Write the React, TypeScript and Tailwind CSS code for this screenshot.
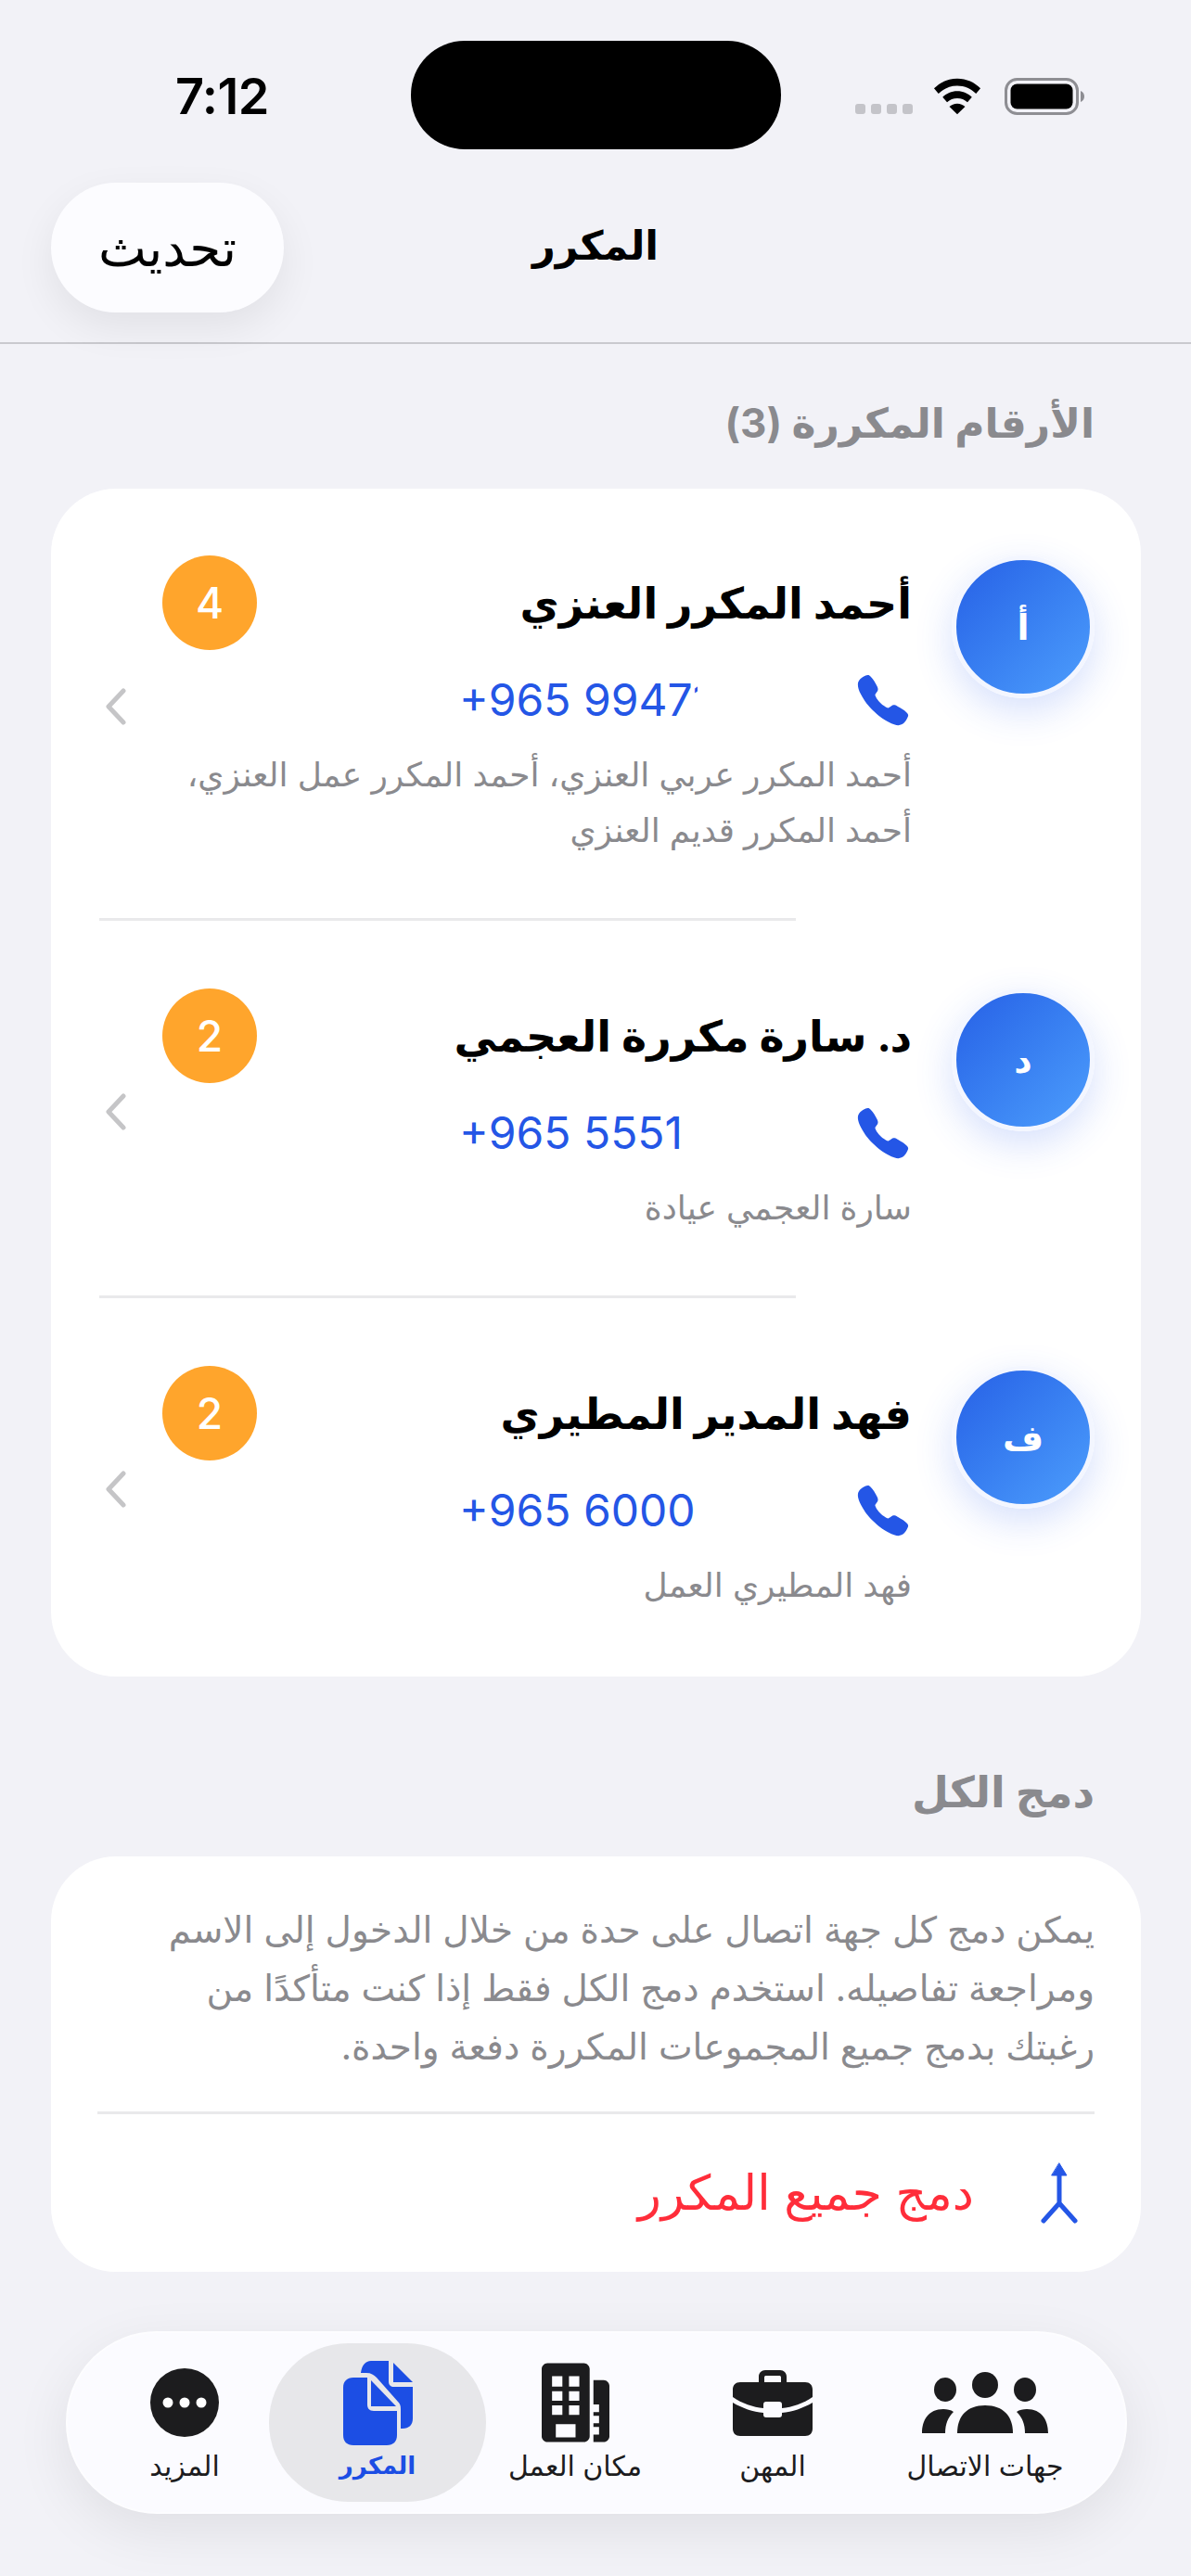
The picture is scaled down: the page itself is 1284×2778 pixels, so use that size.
import { IoCall } from "react-icons/io5";

const contacts = [
  { initial: "أ", name: "أحمد المكرر العنزي", count: 4, phone: "+965 99471", phoneBox: "w-[257px] overflow-hidden", aliases: ["أحمد المكرر عربي العنزي، أحمد المكرر عمل العنزي،", "أحمد المكرر قديم العنزي"] },
  { initial: "د", name: "د. سارة مكررة العجمي", count: 2, phone: "+965 5551", phoneBox: "w-[257px]", aliases: ["سارة العجمي عيادة"] },
  { initial: "ف", name: "فهد المدير المطيري", count: 2, phone: "+965 6000", phoneBox: "w-[257px]", aliases: ["فهد المطيري العمل"] },
];

function StatusBar() {
  return (
    <div dir="ltr" className="relative h-[197px] shrink-0">
      <div className="absolute left-[443px] top-[44px] h-[117px] w-[399px] rounded-[58px] bg-black" />
      <div className="flex items-center pl-[189px] pr-[115px] pt-[76px]">
        <span className="text-[54px] font-semibold leading-[56px] tracking-[-0.5px] text-black">7:12</span>
        <div className="ml-auto flex items-center">
          <div className="mt-[26px] flex gap-[6px]">
            {[0, 1, 2, 3].map(i => (
              <span key={i} className="h-[11px] w-[11px] rounded-[3px] bg-[#c4c4c9]" />
            ))}
          </div>
          <svg viewBox="0 0 54 40" className="ml-[22px] h-[40px] w-[52px]" fill="#000">
            <path d="M27 0C16.600 0 7.600 4.200 1 11l5 6c5.300-5.600 12.600-9 21-9s15.700 3.400 21 9l5-6C46.400 4.200 37.400 0 27 0z" />
            <path d="M27 14c-6.500 0-12 2.500-16.400 6.800l5 5.800C18.700 23.500 22.600 22 27 22s8.300 1.500 11.400 4.600l5-5.800C39 16.500 33.500 14 27 14z" />
            <path d="M27 28c-3.500 0-6.600 1.300-8.800 3.500L27 40l8.800-8.500C33.600 29.300 30.500 28 27 28z" />
          </svg>
          <svg viewBox="0 0 86 40" className="ml-[25px] h-[40px] w-[86px]">
            <rect x="1.500" y="1.500" width="77" height="37" rx="12" fill="none" stroke="#8e8e93" strokeWidth="3" />
            <rect x="6.500" y="6.500" width="67" height="27" rx="7" fill="#000" />
            <path d="M82 14c2.500 1 4 3.200 4 6s-1.500 5-4 6z" fill="#8e8e93" />
          </svg>
        </div>
      </div>
    </div>
  );
}

function ContactRow({ c, pad }: { c: (typeof contacts)[number]; pad: string }) {
  return (
    <div className={pad}>
      <div className="flex items-start pl-[58px] pr-[50px]">
        <div className="flex h-[154px] w-[154px] shrink-0 items-center justify-center rounded-full border-[5px] border-[#f3f6ff] bg-gradient-to-br from-[#2860e6] to-[#4d9dfc] text-[38px] font-bold text-white shadow-[0_14px_40px_rgba(50,100,240,0.2)]">
          {c.initial}
        </div>
        <div className="ml-[38px] mr-[43px] min-w-0 flex-1">
          <div className="flex h-[102px] items-center justify-between">
            <span className="text-[46px] font-bold leading-[60px] text-black">{c.name}</span>
            <span className="flex h-[102px] w-[102px] items-center justify-center rounded-full bg-[#ffa52c] font-['Inter',sans-serif] text-[46px] font-medium text-white">
              {c.count}
            </span>
          </div>
          <div className="mt-[26px] flex h-[56px] items-center">
            <IoCall className="h-[62px] w-[62px] shrink-0 text-[#2456e6]" />
            <span dir="ltr" className={`mr-[169px] whitespace-nowrap text-left font-['Inter',sans-serif] text-[48px] leading-[56px] text-[#2456e6] ${c.phoneBox}`}>
              {c.phone}
            </span>
          </div>
          <div className="mt-[22px] text-[36px] leading-[60px] text-[#8a8a8e]">
            {c.aliases.map(a => (
              <div key={a} className="whitespace-nowrap">{a}</div>
            ))}
          </div>
        </div>
        <svg viewBox="0 0 24 40" fill="none" className="h-[40px] w-[24px] shrink-0 self-center" stroke="#c5c5c7" strokeWidth="5" strokeLinecap="round" strokeLinejoin="round">
          <path d="M20 3 4 20l16 17" />
        </svg>
      </div>
    </div>
  );
}

function Tab({ label, active, box, children }: { label: string; active?: boolean; box: string; children: React.ReactNode }) {
  return (
    <div className={`flex h-[171px] shrink-0 flex-col items-center justify-end pb-[19px] ${box}`}>
      <div className="flex h-[96px] items-center justify-center">{children}</div>
      <span className={active ? "whitespace-nowrap text-[26px] font-bold leading-[40px] text-[#1c4ee4]" : "whitespace-nowrap text-[30px] leading-[40px] text-[#1c1c1e]"}>{label}</span>
    </div>
  );
}

export default function App() {
  return (
    <div className="flex h-[2778px] w-[1284px] flex-col overflow-hidden bg-[#f2f2f7] font-['Inter','DejaVu_Sans',sans-serif]">
      <StatusBar />

      {/* Nav header */}
      <div className="relative flex h-[174px] shrink-0 items-start justify-center border-b-2 border-[#c9c9ce]">
        <div className="absolute left-[55px] top-0 flex h-[140px] w-[251px] items-center justify-center rounded-[70px] bg-[#fcfcff] text-[55px] text-black shadow-[0_16px_44px_rgba(0,0,0,0.07)]">
          تحديث
        </div>
        <span className="mt-[37px] text-[43px] font-bold leading-[60px] text-black">المكرر</span>
      </div>

      <div dir="rtl" className="flex flex-1 flex-col pl-[55px] pr-[54px]">
        <h2 className="mt-[55px] pr-[50px] text-[44px] font-bold leading-[60px] text-[#8a8a8e]">الأرقام المكررة (3)</h2>

        <div className="mt-[41px] flex flex-col rounded-[70px] bg-white pt-[72px]">
          <ContactRow c={contacts[0]} pad="pb-[65px]" />
          <div className="ml-[52px] mr-[372px] h-[3px] bg-[#e9e9eb]" />
          <ContactRow c={contacts[1]} pad="pb-[65px] pt-[73px]" />
          <div className="ml-[52px] mr-[372px] h-[3px] bg-[#e9e9eb]" />
          <ContactRow c={contacts[2]} pad="pb-[69px] pt-[73px]" />
        </div>

        <h2 className="mt-[94px] pr-[50px] text-[46px] font-bold leading-[60px] text-[#8a8a8e]">دمج الكل</h2>

        <div className="mt-[40px] rounded-[70px] bg-white px-[50px] pb-[52px] pt-[47px]">
          <p className="whitespace-nowrap text-[39px] leading-[63px] text-[#8a8a8e]">
            يمكن دمج كل جهة اتصال على حدة من خلال الدخول إلى الاسم
            <br />
            ومراجعة تفاصيله. استخدم دمج الكل فقط إذا كنت متأكدًا من
            <br />
            رغبتك بدمج جميع المجموعات المكررة دفعة واحدة.
          </p>
          <div className="mt-[39px] h-[3px] bg-[#e9e9eb]" />
          <div className="mt-[52px] flex h-[66px] items-center">
            <svg viewBox="0 0 40 66" className="mr-[18px] h-[66px] w-[40px]" fill="none" stroke="#2456e6" strokeWidth="5" strokeLinecap="round" strokeLinejoin="round">
              <path d="M20 10v34M3 63l17-19 17 19" />
              <path d="M20 1l8 13H12z" fill="#2456e6" strokeWidth="1" />
            </svg>
            <span className="mr-[72px] text-[52px] leading-[60px] text-[#ff2d3a]">دمج جميع المكرر</span>
          </div>
        </div>

        {/* Tab bar */}
        <div className="ml-[16px] mr-[15px] mt-[64px] flex h-[197px] items-center rounded-[98px] border-2 border-[#fdfdff] bg-[#fbfbff] pr-[36px] shadow-[0_18px_60px_rgba(0,0,0,0.08)]">
          <Tab label="جهات الاتصال" box="w-[230px]">
            <svg viewBox="0 0 136 66" className="h-[66px] w-[136px]" fill="#1c1c1e">
              <ellipse cx="68" cy="14" rx="14" ry="14" />
              <ellipse cx="25" cy="19" rx="12" ry="13" />
              <ellipse cx="111" cy="19" rx="12" ry="13" />
              <path d="M38 66c0-18 10-30 30-30s30 12 30 30z" />
              <path d="M0 66c0-14 7-26 23-26 4 0 8 .7 11 3-6 6-9 13-9 23z" />
              <path d="M136 66c0-14-7-26-23-26-4 0-8 .7-11 3 6 6 9 13 9 23z" />
            </svg>
          </Tab>
          <Tab label="المهن" box="mr-[19px] w-[190px]">
            <svg viewBox="0 0 86 72" className="h-[72px] w-[86px]" fill="#1c1c1e">
              <path d="M28 14V8c0-4 3-7 7-7h16c4 0 7 3 7 7v6h-6V9c0-1.500-.7-2-2-2H36c-1.300 0-2 .5-2 2v5z" />
              <path d="M8 14h70c5 0 8 3 8 8v8c-10 7-22 11-33 12v-4c0-2-1-3-3-3H36c-2 0-3 1-3 3v4C22 41 10 37 0 30v-8c0-5 3-8 8-8z" />
              <path d="M0 36c10 6 22 10 33 11v2c0 2 1 3 3 3h14c2 0 3-1 3-3v-2c11-1 23-5 33-11v28c0 5-3 8-8 8H8c-5 0-8-3-8-8z" />
            </svg>
          </Tab>
          <Tab label="مكان العمل" box="mr-[23px] w-[190px]">
            <svg viewBox="0 0 72 84" className="h-[86px] w-[73px]" fill="#1c1c1e" fillRule="evenodd">
              <path d="M6 0h39c3 0 6 3 6 6v72c0 3-3 6-6 6H6c-3 0-6-3-6-6V6c0-3 3-6 6-6zM11 14v11h11V14zM29 14v11h11V14zM11 30v10h11V30zM29 30v10h11V30zM11 45v10h11V45zM29 45v10h11V45zM15 65v14h21V65z" />
              <path d="M55 18h11c3 0 6 3 6 6v54c0 3-3 6-6 6H55V76h6v-8h-6v-4h6v-8h-6v-4h6v-8h-6z" />
            </svg>
          </Tab>
          <Tab label="المكرر" active box="mr-[1px] w-[234px] rounded-[85px] bg-[#e7e7ea]">
            <svg viewBox="0 0 75 91" className="h-[91px] w-[75px]" fill="#1c4ee4">
              <path d="M54 2 75 23H54z" />
              <path d="M30 0h19v22c0 4 2 6 6 6h20v34c0 7-4 11-11 11h-2V52c0-4-1-6-3-8L36 18c-3-3-6-5-11-5h-6c1-8 5-13 11-13z" />
              <path d="M30 21 57 49H30z" />
              <path d="M11 18h15v29c0 4 2 7 7 7h25v26c0 7-4 11-11 11H11C4 91 0 87 0 80V29c0-7 4-11 11-11z" />
            </svg>
          </Tab>
          <Tab label="المزيد" box="mr-[11px] w-[160px]">
            <svg viewBox="0 0 74 74" className="h-[74px] w-[74px]">
              <circle cx="37" cy="37" r="37" fill="#1c1c1e" />
              <circle cx="19" cy="37" r="5.500" fill="#fff" />
              <circle cx="37" cy="37" r="5.500" fill="#fff" />
              <circle cx="55" cy="37" r="5.500" fill="#fff" />
            </svg>
          </Tab>
        </div>
      </div>
    </div>
  );
}
